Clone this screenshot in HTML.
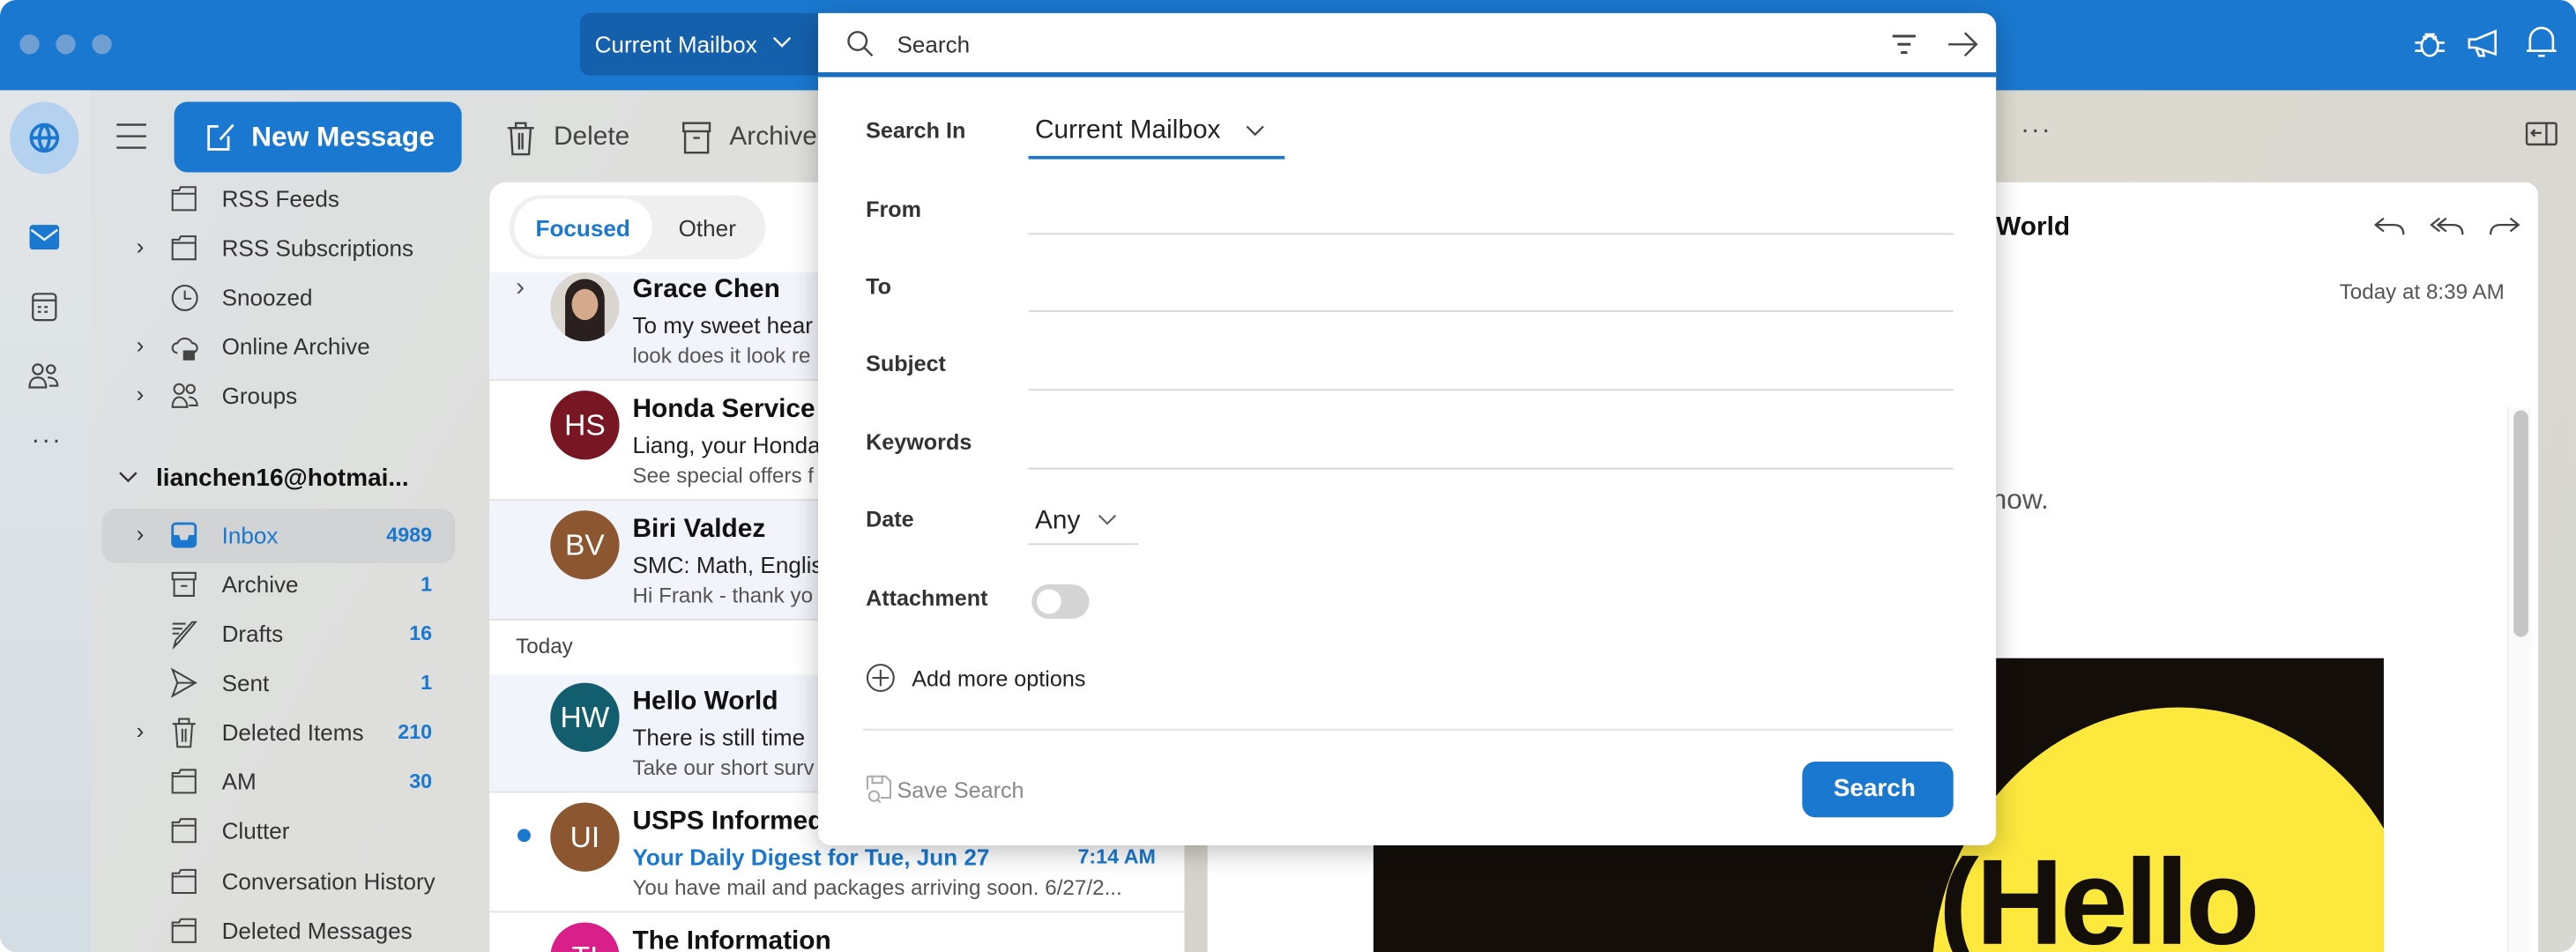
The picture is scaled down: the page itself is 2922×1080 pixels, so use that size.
<!DOCTYPE html>
<html><head><meta charset="utf-8"><style>
*{margin:0;padding:0;box-sizing:border-box}
html,body{width:2922px;height:1080px;overflow:hidden;background:#fff}
#w{position:absolute;left:0;top:0;width:1568px;height:580px;transform:scale(1.86352,1.86207);transform-origin:0 0;font-family:"Liberation Sans",sans-serif;background:linear-gradient(120deg,#dfe3e6,#ddd9cf 60%,#d7d8d2);overflow:hidden;border-radius:10px}
.a{position:absolute}
.t{position:absolute;white-space:nowrap}
svg{position:absolute;overflow:visible}
.fi{font-size:14px;color:#333}
.cnt{font-size:12.5px;color:#1a78d0;font-weight:bold;text-align:right;width:40px}
.av{position:absolute;width:42px;height:42px;border-radius:50%;color:#fff;font-size:18px;text-align:center;line-height:42px}
.nm{font-size:16px;color:#111;font-weight:bold}
.sb{font-size:14px;color:#222}
.pv{font-size:13px;color:#555}
.lb{font-size:13.5px;color:#333;font-weight:bold}
.ul{position:absolute;height:1px;background:#d6d6d6}
</style></head><body><div id="w">
<div class="a" style="left:0;top:0;width:1568px;height:55px;background:#1a78d0"></div>
<div class="a" style="left:12px;top:21px;width:12px;height:12px;border-radius:50%;background:#6f9fd3"></div>
<div class="a" style="left:34px;top:21px;width:12px;height:12px;border-radius:50%;background:#6f9fd3"></div>
<div class="a" style="left:56px;top:21px;width:12px;height:12px;border-radius:50%;background:#6f9fd3"></div>
<div class="a" style="left:353px;top:8px;width:150px;height:38px;background:#1560ad;border-radius:6px 0 0 6px"></div>
<div class="t" style="left:362px;top:19px;color:#fff;font-size:14px">Current Mailbox</div>
<svg style="left:470px;top:22px" width="12" height="8"><path d="M1 1l5 5 5-5" stroke="#fff" fill="none" stroke-width="1.3"/></svg>
<svg style="left:1468px;top:16px" width="22" height="22" fill="none" stroke="#fff" stroke-width="1.4"><ellipse cx="11" cy="12" rx="5" ry="6"/><path d="M7 6l2 2M15 6l-2 2M2 10h4M16 10h4M2 15h4M16 15h4M8 5h6"/></svg>
<svg style="left:1501px;top:17px" width="22" height="20" fill="none" stroke="#fff" stroke-width="1.4"><path d="M2 7h4l12-5v14L6 12H2zM6 12l2 5h3l-1-4"/></svg>
<svg style="left:1537px;top:15px" width="20" height="22" fill="none" stroke="#fff" stroke-width="1.4"><path d="M3 16V9a7 7 0 0114 0v7zM1 16h18M8 19h4"/></svg>
<div class="a" style="left:0;top:55px;width:55px;height:525px;background:linear-gradient(180deg,#e3e6e8,#d4dde3)"></div>
<div class="a" style="left:6px;top:62px;width:42px;height:44px;border-radius:50%;background:#b4d2f0"></div>
<svg style="left:17px;top:74px" width="20" height="20" fill="none" stroke="#1a78d0" stroke-width="2"><circle cx="10" cy="10" r="8"/><path d="M2 10h16M10 2c-4 4-4 12 0 16M10 2c4 4 4 12 0 16"/></svg>
<div class="a" style="left:18px;top:137px;width:18px;height:15px;background:#1a78d0;border-radius:2px"></div>
<svg style="left:18px;top:137px" width="18" height="15"><path d="M1 3l8 6 8-6" stroke="#e5eaf0" fill="none" stroke-width="1.4"/></svg>
<svg style="left:19px;top:178px" width="16" height="18" fill="none" stroke="#444" stroke-width="1.2"><rect x="1" y="1" width="14" height="16" rx="2"/><path d="M1 5h14M4 9h2M8 9h2M4 12h2M8 12h2"/></svg>
<svg style="left:17px;top:220px" width="20" height="18" fill="none" stroke="#444" stroke-width="1.2"><circle cx="6" cy="5" r="3"/><circle cx="14" cy="5" r="2.5"/><path d="M1 16c0-4 2-6 5-6s5 2 5 6zM12 10c4 0 6 2 6 5h-5"/></svg>
<div class="t" style="left:19px;top:260px;font-size:16px;color:#444;letter-spacing:1px">···</div>
<svg style="left:70px;top:75px" width="20" height="16" stroke="#444" stroke-width="1.3"><path d="M1 1h18M1 8h18M1 15h18"/></svg>
<div class="a" style="left:106px;top:62px;width:175px;height:43px;background:#1a78d0;border-radius:8px"></div>
<svg style="left:124px;top:74px" width="20" height="20" fill="none" stroke="#fff" stroke-width="1.5"><path d="M9 3H3v14h12V9M10 11l8-9"/></svg>
<div class="t" style="left:153px;top:74px;color:#fff;font-size:17px;font-weight:bold">New Message</div>
<svg style="left:308px;top:73px" width="18" height="22" fill="none" stroke="#444" stroke-width="1.3"><path d="M1 5h16M6 5V2h6v3M3 5l1 16h10l1-16M8 8v10M10 8v10"/></svg>
<div class="t" style="left:337px;top:75px;font-size:16px;color:#444">Delete</div>
<svg style="left:415px;top:74px" width="18" height="20" fill="none" stroke="#444" stroke-width="1.3"><rect x="1" y="1" width="16" height="5"/><path d="M2 6v13h14V6M7 10h4"/></svg>
<div class="t" style="left:444px;top:75px;font-size:16px;color:#444">Archive</div>
<div class="t" style="left:1230px;top:71px;font-size:16px;color:#444;letter-spacing:1px">···</div>
<svg style="left:1537px;top:74px" width="20" height="15" fill="none" stroke="#444" stroke-width="1.3"><rect x="1" y="1" width="18" height="13" rx="1"/><path d="M13 1v13M10 7H4M6 5L4 7l2 2"/></svg>
<svg style="left:104px;top:113px" width="16" height="16" fill="none" stroke="#444" stroke-width="1.1"><path d="M1 3h4l1-2h9v14H1z M1 5h14"/></svg><div class="t fi" style="left:135px;top:113px">RSS Feeds</div>
<div class="t fi" style="left:83px;top:142px">›</div><svg style="left:104px;top:143px" width="16" height="16" fill="none" stroke="#444" stroke-width="1.1"><path d="M1 3h4l1-2h9v14H1z M1 5h14"/></svg><div class="t fi" style="left:135px;top:143px">RSS Subscriptions</div>
<svg style="left:104px;top:173px" width="17" height="17" fill="none" stroke="#444" stroke-width="1.1"><circle cx="8.5" cy="8.5" r="7.5"/><path d="M8.5 4v5h4"/></svg><div class="t fi" style="left:135px;top:173px">Snoozed</div>
<div class="t fi" style="left:83px;top:202px">›</div><svg style="left:104px;top:203px" width="17" height="17" fill="none" stroke="#444" stroke-width="1.1"><path d="M4 12a3 3 0 010-6 5 5 0 019 0 3 3 0 010 6"/><rect x="8" y="11" width="6" height="5" fill="#444"/></svg><div class="t fi" style="left:135px;top:203px">Online Archive</div>
<div class="t fi" style="left:83px;top:232px">›</div><svg style="left:104px;top:233px" width="17" height="16" fill="none" stroke="#444" stroke-width="1.1"><circle cx="5" cy="4" r="3"/><circle cx="12" cy="4" r="2.5"/><path d="M1 15c0-4 2-6 4-6s5 2 5 6zM11 9c3 0 5 2 5 5h-5"/></svg><div class="t fi" style="left:135px;top:233px">Groups</div>
<svg style="left:72px;top:287px" width="12" height="8"><path d="M1 1l5 5 5-5" stroke="#333" fill="none" stroke-width="1.3"/></svg>
<div class="t" style="left:95px;top:283px;font-size:15px;font-weight:bold;color:#111">lianchen16@hotmai...</div>
<div class="a" style="left:62px;top:310px;width:215px;height:33px;background:rgba(200,202,205,.6);border-radius:8px"></div>
<div class="t fi" style="left:83px;top:317px">›</div><svg style="left:104px;top:318px" width="16" height="16"><rect x="1" y="1" width="14" height="14" rx="2" fill="none" stroke="#1a78d0" stroke-width="1.5"/><path d="M1 8h4l1 3h4l1-3h4v7H1z" fill="#1a78d0"/></svg><div class="t" style="left:135px;top:318px;font-size:14px;color:#1a78d0">Inbox</div><div class="t cnt" style="left:223px;top:319px">4989</div>
<svg style="left:104px;top:348px" width="16" height="16" fill="none" stroke="#444" stroke-width="1.1"><rect x="1" y="1" width="14" height="4"/><path d="M2 5v10h12V5M6 9h4"/></svg><div class="t fi" style="left:135px;top:348px">Archive</div><div class="t cnt" style="left:223px;top:349px">1</div>
<svg style="left:104px;top:377px" width="17" height="18" fill="none" stroke="#444" stroke-width="1.1"><path d="M1 3h8M1 6h6M1 9h4M15 2l-10 12-3 3 1-4 10-11z"/></svg><div class="t fi" style="left:135px;top:378px">Drafts</div><div class="t cnt" style="left:223px;top:379px">16</div>
<svg style="left:104px;top:407px" width="16" height="18" fill="none" stroke="#444" stroke-width="1.1"><path d="M1 1l14 8-14 8 3-8zM4 9h11"/></svg><div class="t fi" style="left:135px;top:408px">Sent</div><div class="t cnt" style="left:223px;top:409px">1</div>
<div class="t fi" style="left:83px;top:437px">›</div><svg style="left:104px;top:437px" width="16" height="19" fill="none" stroke="#444" stroke-width="1.1"><path d="M1 4h14M5 4V1h6v3M3 4l1 14h8l1-14M7 7v8M9 7v8"/></svg><div class="t fi" style="left:135px;top:438px">Deleted Items</div><div class="t cnt" style="left:223px;top:439px">210</div>
<svg style="left:104px;top:468px" width="16" height="16" fill="none" stroke="#444" stroke-width="1.1"><path d="M1 3h4l1-2h9v14H1z M1 5h14"/></svg><div class="t fi" style="left:135px;top:468px">AM</div><div class="t cnt" style="left:223px;top:469px">30</div>
<svg style="left:104px;top:498px" width="16" height="16" fill="none" stroke="#444" stroke-width="1.1"><path d="M1 3h4l1-2h9v14H1z M1 5h14"/></svg><div class="t fi" style="left:135px;top:498px">Clutter</div>
<svg style="left:104px;top:529px" width="16" height="16" fill="none" stroke="#444" stroke-width="1.1"><path d="M1 3h4l1-2h9v14H1z M1 5h14"/></svg><div class="t fi" style="left:135px;top:529px">Conversation History</div>
<svg style="left:104px;top:559px" width="16" height="16" fill="none" stroke="#444" stroke-width="1.1"><path d="M1 3h4l1-2h9v14H1z M1 5h14"/></svg><div class="t fi" style="left:135px;top:559px">Deleted Messages</div>
<div class="a" style="left:298px;top:111px;width:423px;height:469px;background:#fff;border-radius:10px 0 0 0"></div>
<div class="a" style="left:310px;top:119px;width:156px;height:39px;background:#efefef;border-radius:20px"></div>
<div class="a" style="left:313px;top:121px;width:84px;height:35px;background:#fff;border-radius:18px"></div>
<div class="t" style="left:326px;top:131px;font-size:14px;color:#1a78d0;font-weight:bold">Focused</div>
<div class="t" style="left:413px;top:131px;font-size:14px;color:#333">Other</div>
<div class="a" style="left:298px;top:166px;width:423px;height:65px;background:#f1f4fb"></div>
<div class="a" style="left:298px;top:231px;width:423px;height:1px;background:#e2e2e2"></div>
<div class="a" style="left:298px;top:305px;width:423px;height:72px;background:#f1f4fb"></div>
<div class="a" style="left:298px;top:304px;width:423px;height:1px;background:#e2e2e2"></div>
<div class="a" style="left:298px;top:377px;width:423px;height:1px;background:#e2e2e2"></div>
<div class="a" style="left:298px;top:411px;width:423px;height:71px;background:#f1f4fb"></div>
<div class="a" style="left:298px;top:482px;width:423px;height:1px;background:#e2e2e2"></div>
<div class="a" style="left:298px;top:555px;width:423px;height:1px;background:#e2e2e2"></div>
<div class="t" style="left:314px;top:167px;font-size:16px;color:#555">›</div>
<div class="av" style="left:335px;top:166px;background:#dcd6d0;overflow:hidden"><div class="a" style="left:9px;top:4px;width:24px;height:38px;border-radius:12px 12px 4px 4px;background:#2a2020"></div><div class="a" style="left:13px;top:10px;width:16px;height:19px;border-radius:50%;background:#d4a98c"></div></div>
<div class="t nm" style="left:385px;top:168px">Grace Chen</div><div class="t sb" style="left:385px;top:190px">To my sweet hear</div><div class="t pv" style="left:385px;top:209px">look does it look re</div>
<div class="av" style="left:335px;top:238px;background:#781623">HS</div>
<div class="t nm" style="left:385px;top:241px">Honda Service</div><div class="t sb" style="left:385px;top:263px">Liang, your Honda</div><div class="t pv" style="left:385px;top:282px">See special offers f</div>
<div class="av" style="left:335px;top:311px;background:#8c5630">BV</div>
<div class="t nm" style="left:385px;top:314px">Biri Valdez</div><div class="t sb" style="left:385px;top:336px">SMC: Math, Englis</div><div class="t pv" style="left:385px;top:355px">Hi Frank - thank yo</div>
<div class="t" style="left:314px;top:386px;font-size:13px;color:#444">Today</div>
<div class="av" style="left:335px;top:416px;background:#135e6e">HW</div>
<div class="t nm" style="left:385px;top:419px">Hello World</div><div class="t sb" style="left:385px;top:441px">There is still time</div><div class="t pv" style="left:385px;top:460px">Take our short surv</div>
<div class="a" style="left:315px;top:505px;width:8px;height:8px;border-radius:50%;background:#1a78d0"></div>
<div class="av" style="left:335px;top:489px;background:#8c5630">UI</div>
<div class="t nm" style="left:385px;top:492px">USPS Informed</div><div class="t" style="left:385px;top:514px;font-size:14px;color:#1a78d0;font-weight:bold">Your Daily Digest for Tue, Jun 27</div><div class="t" style="left:656px;top:515px;font-size:12.5px;color:#1a78d0;font-weight:bold">7:14 AM</div><div class="t pv" style="left:385px;top:533px">You have mail and packages arriving soon. 6/27/2...</div>
<div class="av" style="left:335px;top:562px;background:#d91f8a">TI</div>
<div class="t nm" style="left:385px;top:565px">The Information</div>
<div class="a" style="left:721px;top:111px;width:14px;height:469px;background:#d6d3cc"></div>
<div class="a" style="left:735px;top:111px;width:810px;height:469px;background:#fff;border-radius:0 8px 0 0"></div>
<div class="t" style="left:1215px;top:130px;font-size:16px;font-weight:bold;color:#111">World</div>
<svg style="left:1445px;top:131px" width="20" height="15" fill="none" stroke="#444" stroke-width="1.2"><path d="M6 2L1 6l5 4M1 6h11c4 0 6 2 6 6"/></svg>
<svg style="left:1479px;top:131px" width="22" height="15" fill="none" stroke="#444" stroke-width="1.2"><path d="M6 2L1 6l5 4M10 2L5 6l5 4M5 6h9c4 0 6 2 6 6"/></svg>
<svg style="left:1514px;top:131px" width="20" height="15" fill="none" stroke="#444" stroke-width="1.2"><path d="M14 2l5 4-5 4M19 6H8c-4 0-6 2-6 6"/></svg>
<div class="t" style="left:1424px;top:170px;font-size:13px;color:#555">Today at 8:39 AM</div>
<div class="t" style="left:1212px;top:295px;font-size:17px;color:#555">now.</div>
<div class="a" style="left:1526px;top:248px;width:15px;height:332px;background:#fafafa;border-left:1px solid #eee"></div>
<div class="a" style="left:1530px;top:250px;width:9px;height:138px;background:#c6c6c6;border-radius:5px"></div>
<div class="a" style="left:836px;top:401px;width:615px;height:179px;background:#130e0a;overflow:hidden">
<div class="a" style="left:340px;top:30px;width:300px;height:330px;border-radius:50%;background:#fde83e"></div>
<div class="t" style="left:344px;top:106px;font-size:74px;font-weight:bold;color:#130e0a;letter-spacing:-2px">(Hello</div>
</div>
<div class="a" style="left:498px;top:8px;width:717px;height:507px;background:#fff;border-radius:0 8px 8px 8px;box-shadow:0 4px 16px rgba(0,0,0,.25)"></div>
<div class="a" style="left:498px;top:44px;width:717px;height:3px;background:#1a6ec0"></div>
<svg style="left:515px;top:18px" width="18" height="18" fill="none" stroke="#444" stroke-width="1.3"><circle cx="7" cy="7" r="5.5"/><path d="M11 11l5 5"/></svg>
<div class="t" style="left:546px;top:19px;font-size:14px;color:#333">Search</div>
<svg style="left:1151px;top:20px" width="16" height="14" stroke="#444" stroke-width="1.6"><path d="M1 2h14M4 7h8M6 12h4"/></svg>
<svg style="left:1185px;top:18px" width="20" height="18" fill="none" stroke="#444" stroke-width="1.3"><path d="M1 9h17M11 2l7 7-7 7"/></svg>
<div class="t lb" style="left:527px;top:72px">Search In</div>
<div class="t" style="left:630px;top:71px;font-size:16px;color:#222">Current Mailbox</div>
<svg style="left:758px;top:76px" width="12" height="8"><path d="M1 1l5 5 5-5" stroke="#444" fill="none" stroke-width="1.2"/></svg>
<div class="a" style="left:626px;top:95px;width:156px;height:2px;background:#1a78d0"></div>
<div class="t lb" style="left:527px;top:120px">From</div><div class="ul" style="left:626px;top:142px;width:563px"></div>
<div class="t lb" style="left:527px;top:167px">To</div><div class="ul" style="left:626px;top:189px;width:563px"></div>
<div class="t lb" style="left:527px;top:214px">Subject</div><div class="ul" style="left:626px;top:237px;width:563px"></div>
<div class="t lb" style="left:527px;top:262px">Keywords</div><div class="ul" style="left:626px;top:285px;width:563px"></div>
<div class="t lb" style="left:527px;top:309px">Date</div>
<div class="t" style="left:630px;top:309px;font-size:16px;color:#222">Any</div>
<svg style="left:668px;top:313px" width="12" height="8"><path d="M1 1l5 5 5-5" stroke="#666" fill="none" stroke-width="1.2"/></svg>
<div class="ul" style="left:626px;top:331px;width:67px"></div>
<div class="t lb" style="left:527px;top:357px">Attachment</div>
<div class="a" style="left:628px;top:356px;width:35px;height:21px;border-radius:11px;background:#d4d4d4"></div>
<div class="a" style="left:631px;top:359px;width:15px;height:15px;border-radius:50%;background:#fff"></div>
<svg style="left:527px;top:404px" width="18" height="18" fill="none" stroke="#444" stroke-width="1.1"><circle cx="9" cy="9" r="8"/><path d="M9 4v10M4 9h10"/></svg>
<div class="t" style="left:555px;top:406px;font-size:13.5px;color:#222">Add more options</div>
<div class="a" style="left:525px;top:444px;width:664px;height:1px;background:#ddd"></div>
<svg style="left:527px;top:472px" width="16" height="18" fill="none" stroke="#aaa" stroke-width="1.1"><path d="M1 1h11l3 3v10H9M1 1v8M4 1v4h6V1"/><circle cx="5" cy="13" r="3"/><path d="M7 15l2 2"/></svg>
<div class="t" style="left:546px;top:474px;font-size:13.5px;color:#888">Save Search</div>
<div class="a" style="left:1097px;top:464px;width:92px;height:34px;background:#1a78d0;border-radius:8px"></div>
<div class="t" style="left:1116px;top:472px;font-size:15px;color:#fff;font-weight:bold">Search</div>
</div></body></html>
